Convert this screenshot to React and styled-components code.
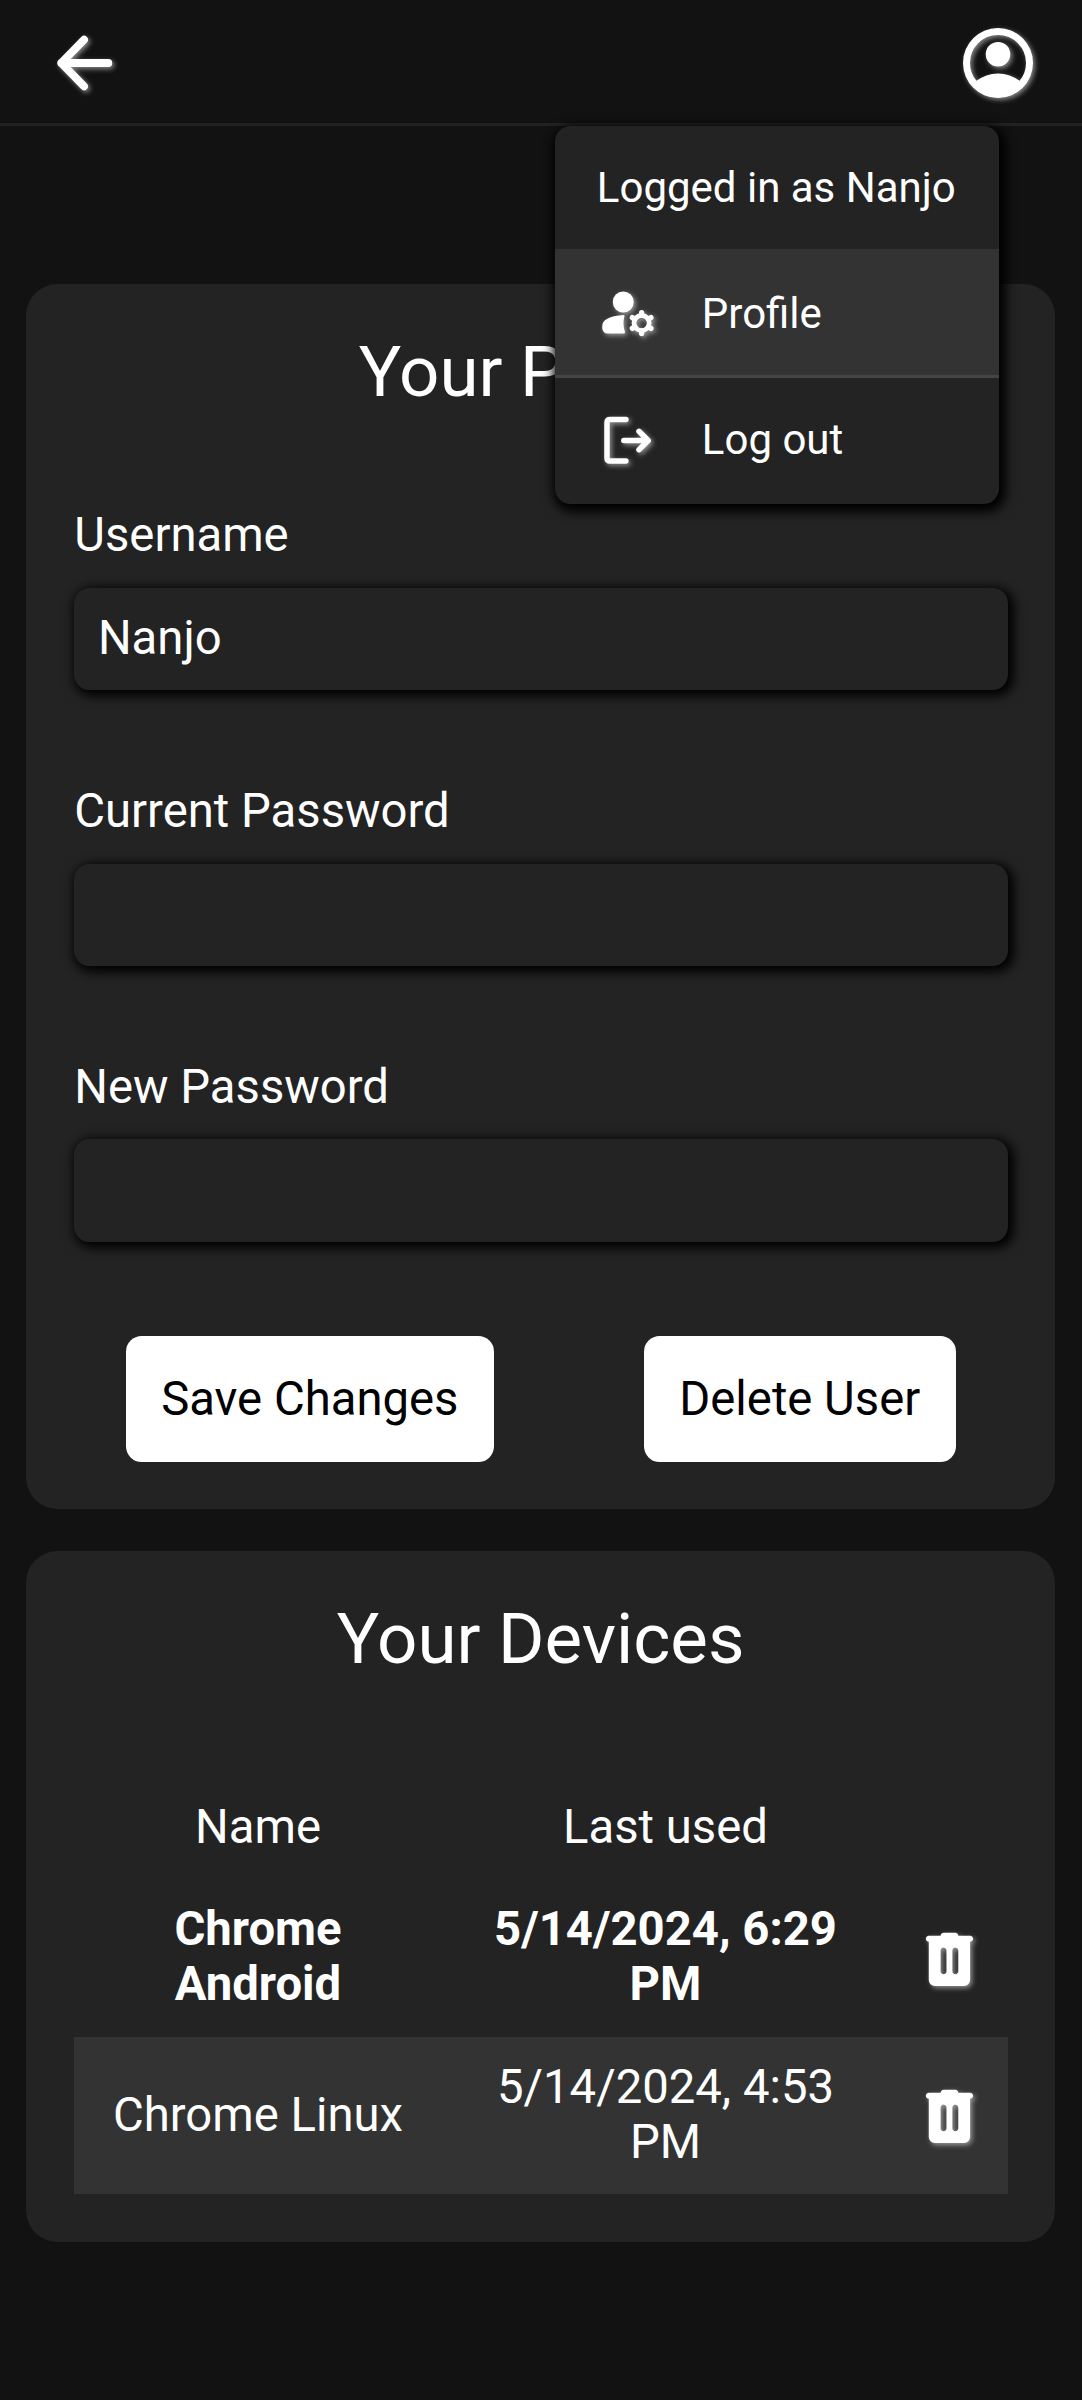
import React from "react";
import styled, { createGlobalStyle, css } from "styled-components";

const GlobalStyle = createGlobalStyle`
  * { box-sizing: border-box; }
  body {
    margin: 0;
    background: #121212;
    color: #fff;
    font-family: Roboto, "Liberation Sans", sans-serif;
    font-size: 47.25px;
    line-height: 55px;
  }
`;

const Page = styled.div`
  min-height: 2400px;
  background: #121212;
`;

const Header = styled.header`
  position: relative;
  height: 126px;
  padding: 0 42.2px 0 42px;
  box-shadow: inset 0 -3px #222;
  display: flex;
  align-items: center;
  justify-content: space-between;
`;

const IconButton = styled.button`
  display: flex;
  padding: 0;
  border: 0;
  background: none;
  color: #fff;
`;

const Icon = styled.svg`
  display: block;
  flex: none;
  width: ${(p) => p.$size}px;
  height: ${(p) => p.$size}px;
  fill: currentColor;
  overflow: visible;
  filter: drop-shadow(2.6px 2.6px 2.6px rgba(255, 255, 255, 0.5));
`;

const Menu = styled.div`
  position: absolute;
  z-index: 2;
  top: 126px;
  right: 83.2px;
  width: 444px;
  border-radius: 15.75px;
  overflow: hidden;
  background: #232323;
  font-size: 42px;
  line-height: 49px;
  box-shadow: 2.6px 3.9px 10.5px 3.9px #000;
`;

const MenuRow = styled.div`
  height: ${(p) => p.$height}px;
  padding: 0 42px;
  display: flex;
  align-items: center;
  gap: 42px;
  white-space: nowrap;
  ${(p) => p.$active && css`
    background: #333;
    border-bottom: 3px solid #444;
  `}
`;

const MenuLabel = styled.span`
  padding-top: ${(p) => p.$top || 0}px;
  padding-bottom: ${(p) => p.$bottom || 0}px;
`;

const Main = styled.main`
  padding: 157.5px 27px 0 26.25px;
  display: flex;
  flex-direction: column;
  gap: 42px;
`;

const Card = styled.section`
  height: ${(p) => p.$height}px;
  padding: 47.25px;
  border-radius: 31.5px;
  background: #232323;
`;

const Title = styled.h1`
  margin: 0 0 96.5px;
  font-size: 70.875px;
  line-height: 82px;
  font-weight: 400;
  text-align: center;
`;

const Field = styled.label`
  display: block;
  margin-bottom: 94.5px;
`;

const FieldLabel = styled.span`
  display: block;
  margin-bottom: 26.625px;
  padding-left: 0.8px;
  line-height: 52px;
`;

const Input = styled.input`
  display: block;
  width: 100%;
  height: 102.5px;
  padding: 0 23.625px 2px 24.4px;
  border: 0;
  border-radius: 15.75px;
  outline: none;
  background: #232323;
  color: #fff;
  font: inherit;
  box-shadow: 2.6px 2.6px 10.5px 2.6px #000;
`;

const Actions = styled.div`
  padding: 0 52px 0 52.5px;
  display: flex;
  justify-content: space-between;
`;

const Button = styled.button`
  width: ${(p) => p.$width}px;
  height: 126px;
  padding: 0;
  border: 0;
  border-radius: 15.75px;
  background: #fff;
  color: #000;
  font: inherit;
`;

const Table = styled.table`
  width: 100%;
  table-layout: fixed;
  border-collapse: collapse;
  text-align: center;
`;

const Row = styled.tr`
  height: ${(p) => (p.$head ? 102.4 : 157.3)}px;
  font-weight: ${(p) => (p.$current ? 700 : 400)};
  background: ${(p) => (p.$shaded ? "#333" : "transparent")};
`;

const Cell = styled.td`
  width: ${(p) => p.$width}px;
  padding: 0 23.625px ${(p) => (p.$lift ? 2 : 0)}px;
  font-weight: inherit;
`;

const BackIcon = () => (
  <Icon $size={84} viewBox="0 0 84 84" aria-hidden="true">
    <path d="M66.3 42H19.3M42 18.7L19.3 42L42 65.3" fill="none" stroke="currentColor" strokeWidth="7.9" strokeLinecap="round" strokeLinejoin="round" />
  </Icon>
);

const AccountIcon = () => (
  <Icon $size={84} viewBox="0 0 24 24" aria-hidden="true">
    <path d="M5.85 17.1q1.275-.975 2.85-1.537T12 15t3.3.563t2.85 1.537q.875-1.025 1.363-2.325T20 12q0-3.325-2.337-5.663T12 4T6.337 6.338T4 12q0 1.475.488 2.775T5.85 17.1M12 13q-1.475 0-2.488-1.012T8.5 9.5t1.013-2.488T12 6t2.488 1.013T15.5 9.5t-1.012 2.488T12 13m0 9q-2.075 0-3.9-.788t-3.175-2.137T2.788 15.9T2 12t.788-3.9t2.137-3.175T8.1 2.788T12 2t3.9.788t3.175 2.137T21.213 8.1T22 12t-.788 3.9t-2.137 3.175t-3.175 2.138T12 22" fillRule="evenodd" />
  </Icon>
);

const ProfileIcon = () => (
  <Icon $size={63} viewBox="0 0 24 24" aria-hidden="true">
    <circle cx="10" cy="8" r="4" />
    <path d="M2 18v-.8q0-.85.43-1.56t1.17-1.09q1.25-.65 2.9-1.1T10 12.95q.6 0 .48.45q-.5 1.5-.4 3t.55 2.9q.2.7-.43.7H4q-.825 0-1.412-.587T2 18" />
    <g fill="none" stroke="currentColor" strokeLinecap="round">
      <circle cx="17" cy="16" r="2.9" strokeWidth="1.8" />
      <path d="M17 13V12M17 19V20M14.4 14.5L13.45 13.95M19.6 14.5L20.55 13.95M14.4 17.5L13.45 18.05M19.6 17.5L20.55 18.05" strokeWidth="2" />
    </g>
  </Icon>
);

const LogoutIcon = () => (
  <Icon $size={63} viewBox="0 0 63 63" aria-hidden="true">
    <path d="M28.9 10.4H13q-3 0-3 3V49.1q0 3 3 3H28.9M26.8 31.5H51M42 22.3L51.2 31.5L42 40.7" fill="none" stroke="currentColor" strokeWidth="5.5" strokeLinecap="round" strokeLinejoin="round" />
  </Icon>
);

const TrashIcon = () => (
  <Icon $size={70.875} viewBox="0 0 24 24" aria-hidden="true">
    <path d="M7 21q-.825 0-1.412-.587T5 19V6q-.425 0-.712-.288T4 5t.288-.712T5 4h4q0-.425.288-.712T10 3h4q.425 0 .713.288T15 4h4q.425 0 .713.288T20 5t-.288.713T19 6v13q0 .825-.587 1.413T17 21zm3-4q.425 0 .713-.288T11 16V9q0-.425-.288-.712T10 8t-.712.288T9 9v7q0 .425.288.713T10 17m4 0q.425 0 .713-.288T15 16V9q0-.425-.288-.712T14 8t-.712.288T13 9v7q0 .425.288.713T14 17" />
  </Icon>
);

const RemoveButton = styled(IconButton)`
  width: 100%;
  padding: 2px 0 0 2px;
  justify-content: center;
`;

const devices = [
  { name: "Chrome Android", used: "5/14/2024, 6:29 PM", current: true },
  { name: "Chrome Linux", used: "5/14/2024, 4:53 PM", current: false },
];

export default function App() {
  return (
    <Page>
      <GlobalStyle />
      <Header>
        <IconButton aria-label="Back"><BackIcon /></IconButton>
        <IconButton aria-label="Account"><AccountIcon /></IconButton>
        <Menu>
          <MenuRow $height={123.3}><MenuLabel>Logged in as Nanjo</MenuLabel></MenuRow>
          <MenuRow $height={128.7} $active><ProfileIcon /><MenuLabel $top={3}>Profile</MenuLabel></MenuRow>
          <MenuRow $height={126}><LogoutIcon /><MenuLabel $bottom={3}>Log out</MenuLabel></MenuRow>
        </Menu>
      </Header>
      <Main>
        <Card $height={1225.7}>
          <Title>Your Profile</Title>
          <Field>
            <FieldLabel>Username</FieldLabel>
            <Input defaultValue="Nanjo" />
          </Field>
          <Field>
            <FieldLabel>Current Password</FieldLabel>
            <Input type="password" />
          </Field>
          <Field>
            <FieldLabel>New Password</FieldLabel>
            <Input type="password" />
          </Field>
          <Actions>
            <Button $width={367.6}>Save Changes</Button>
            <Button $width={312}>Delete User</Button>
          </Actions>
        </Card>
        <Card $height={690.4}>
          <Title>Your Devices</Title>
          <Table>
            <thead>
              <Row $head>
                <Cell as="th" $width={369} $lift>Name</Cell>
                <Cell as="th" $width={446} $lift>Last used</Cell>
                <Cell as="th" />
              </Row>
            </thead>
            <tbody>
              {devices.map((d, i) => (
                <Row key={d.name} $current={d.current} $shaded={i % 2 === 1}>
                  <Cell $lift={d.current}>{d.name}</Cell>
                  <Cell $lift={d.current}>{d.used}</Cell>
                  <Cell><RemoveButton aria-label="Remove device"><TrashIcon /></RemoveButton></Cell>
                </Row>
              ))}
            </tbody>
          </Table>
        </Card>
      </Main>
    </Page>
  );
}
